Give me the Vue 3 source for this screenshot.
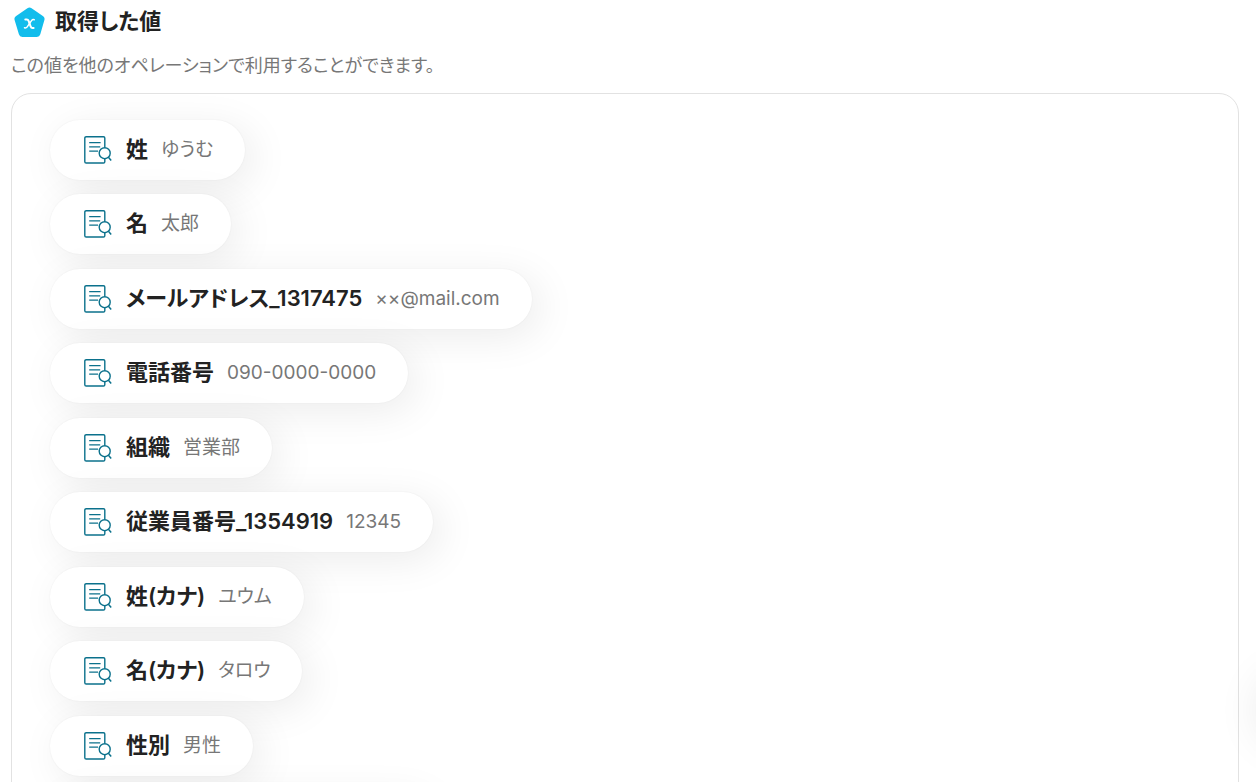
<script setup>
import { ref } from 'vue'

const values = ref([
  { name: '姓', value: 'ゆうむ' },
  { name: '名', value: '太郎' },
  { name: 'メールアドレス_1317475', value: '××@mail.com' },
  { name: '電話番号', value: '090-0000-0000' },
  { name: '組織', value: '営業部' },
  { name: '従業員番号_1354919', value: '12345' },
  { name: '姓(カナ)', value: 'ユウム' },
  { name: '名(カナ)', value: 'タロウ' },
  { name: '性別', value: '男性' }
])
</script>

<template>
  <main class="page">
    <header class="header">
      <svg class="badge" width="32" height="32" viewBox="0 0 32 32">
        <path d="M13.4 2.2Q15.5 .7 17.6 2.2L29.2 10.3Q31.1 11.7 30.4 14L26.3 28.3Q25.6 30.9 22.8 30.9H8.4Q5.6 30.9 4.9 28.3L.6 14Q-.1 11.7 1.8 10.3Z" fill="#12bdec"/>
        <path d="M11.3 13.6H12.8Q14.1 13.6 14.6 14.9L16.6 20.3Q17.2 21.9 18.5 21.9H19.6" fill="none" stroke="#fff" stroke-width="2" stroke-linecap="round"/>
        <path d="M20.2 13.7Q18.6 13.2 17.5 14.6L13.2 20.9Q12.1 22.3 10.5 21.8" fill="none" stroke="#fff" stroke-width="1.5" stroke-linecap="round"/>
      </svg>
      <h1 class="title">取得した値</h1>
    </header>
    <p class="lead">この値を他のオペレーションで利用することができます。</p>

    <section class="panel">
      <ul class="list">
        <li v-for="item in values" :key="item.name" class="pill">
          <svg class="icon" width="28" height="30" viewBox="0 0 28 30" fill="none" stroke="#0b718c">
            <path d="M20.8 12.6V3Q20.8 1.7 19.5 1.7H2.2Q.8 1.7 .8 3V26.7Q.8 28 2.2 28H19.5Q20.8 28 20.8 26.7V23.8" stroke-width="1.4"/>
            <path d="M5.2 7.7H16.6M5.2 11.9H16.2M5.2 16.1H14" stroke-width="1.2"/>
            <circle cx="20.7" cy="18.2" r="5.5" stroke-width="1.4"/>
            <path d="M24.4 22.2L27.2 25.4" stroke-width="1.5"/>
          </svg>
          <span class="name">{{ item.name }}</span>
          <span class="value">{{ item.value }}</span>
        </li>
        <li class="pill pill-next" aria-hidden="true"></li>
      </ul>
    </section>

    <div class="floating" aria-hidden="true"></div>
  </main>
</template>

<style>
body {
  background: #fff;
  overflow: hidden;
}
</style>

<style scoped>
.page {
  height: 100vh;
  box-sizing: border-box;
  overflow: hidden;
  padding: 4px 17px 0 11px;
  font-family: Inter, 'Noto Sans CJK JP', sans-serif;
  font-feature-settings: 'palt';
  color: #222;
}

.header {
  display: flex;
  align-items: center;
  gap: 9px;
  height: 36px;
  padding-left: 3px;
}

.title {
  margin: 0;
  padding-bottom: 2px;
  font-size: 22px;
  line-height: 32px;
  font-weight: 600;
}

.lead {
  margin: 13px 0 15px;
  font-size: 18px;
  line-height: 25px;
  color: #777;
}

.panel {
  border: 1px solid #e2e2e2;
  border-radius: 20px;
  padding: 26px 38px;
}

/* pills sit on alternating rows so the rhythm stays on whole pixels */
.list {
  display: grid;
  grid-auto-rows: 74px 75px;
  align-items: start;
  justify-items: start;
  margin: 0;
  padding: 0;
  list-style: none;
}

.pill {
  display: flex;
  align-items: center;
  box-sizing: border-box;
  height: 60px;
  padding: 0 32px 0 34px;
  border-radius: 30px;
  background: #fff;
  box-shadow: 8px 8px 40px rgba(0, 0, 0, 0.08), 0 0 2px rgba(0, 0, 0, 0.06);
  white-space: nowrap;
}

.pill-next {
  width: 380px;
}

.icon {
  flex-shrink: 0;
  margin-right: 14px;
}

.name {
  margin-right: 13px;
  padding-bottom: 2px;
  font-size: 22px;
  line-height: 32px;
  font-weight: 600;
}

.value {
  font-size: 19px;
  line-height: 28px;
  color: #777;
}

.floating {
  position: fixed;
  right: -70px;
  bottom: 40px;
  width: 64px;
  height: 64px;
  border-radius: 32px;
  box-shadow: 0 0 48px rgba(0, 0, 0, 0.12);
}
</style>
